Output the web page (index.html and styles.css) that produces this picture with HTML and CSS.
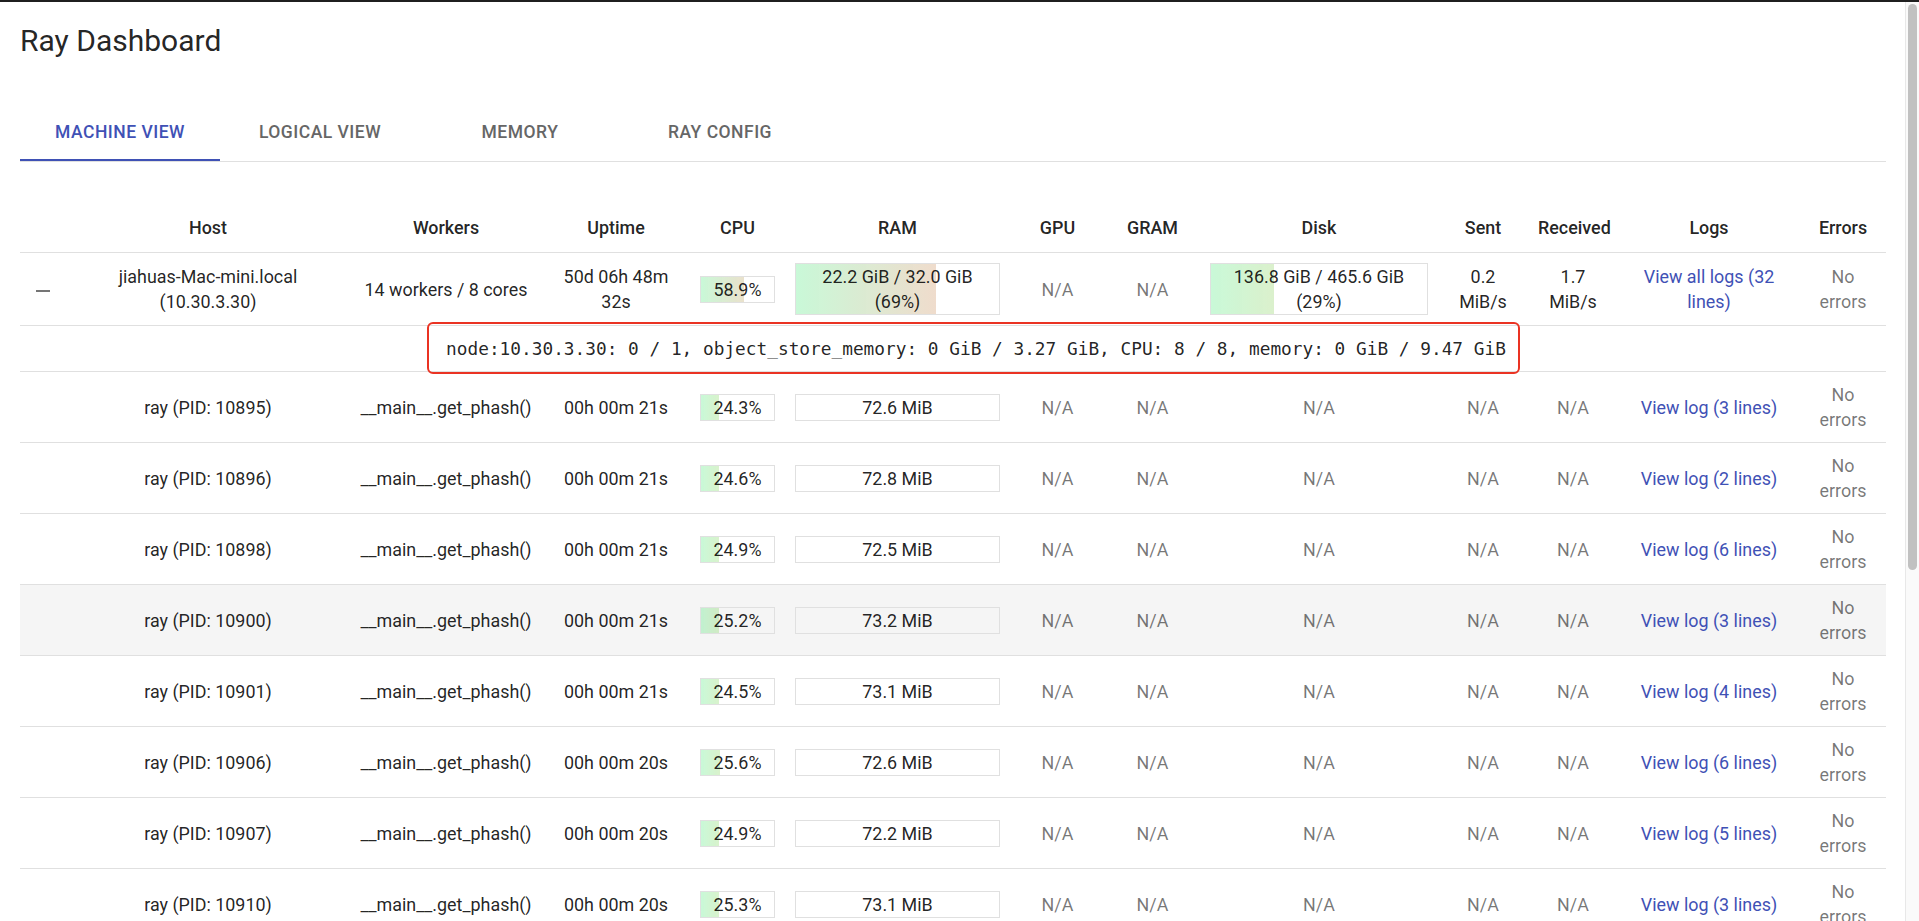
FILE: index.html
```html
<!DOCTYPE html>
<html lang="en">
<head>
<meta charset="utf-8">
<title>Ray Dashboard</title>
<link rel="stylesheet" href="styles.css">
</head>
<body>
<div class="window">
  <main class="app">
    <h1 class="title">Ray Dashboard</h1>
    <nav class="tabs">
      <div class="tab active">Machine View</div>
      <div class="tab">Logical View</div>
      <div class="tab">Memory</div>
      <div class="tab">Ray Config</div>
    </nav>
    <table class="grid">
      <colgroup>
        <col class="c-exp"><col class="c-host"><col class="c-workers"><col class="c-uptime"><col class="c-cpu"><col class="c-ram"><col class="c-gpu"><col class="c-gram"><col class="c-disk"><col class="c-sent"><col class="c-recv"><col class="c-logs"><col class="c-err">
      </colgroup>
      <thead>
        <tr><th></th><th>Host</th><th>Workers</th><th>Uptime</th><th>CPU</th><th>RAM</th><th>GPU</th><th>GRAM</th><th>Disk</th><th>Sent</th><th>Received</th><th>Logs</th><th>Errors</th></tr>
      </thead>
      <tbody>
        <tr>
          <td><span class="collapse"></span></td>
          <td>jiahuas-Mac-mini.local<br>(10.30.3.30)</td>
          <td>14 workers / 8 cores</td>
          <td>50d 06h 48m<br>32s</td>
          <td><div class="bar" style="--p:58.9%;--r:rgba(150,105,0,.2)">58.9%</div></td>
          <td><div class="bar" style="--p:69%;--r:rgba(176,79,0,.2)">22.2 GiB / 32.0 GiB<br>(69%)</div></td>
          <td class="muted">N/A</td>
          <td class="muted">N/A</td>
          <td><div class="bar" style="--p:29%;--r:rgba(74,181,0,.2)">136.8 GiB / 465.6 GiB<br>(29%)</div></td>
          <td>0.2<br>MiB/s</td>
          <td>1.7<br>MiB/s</td>
          <td><a href="#">View all logs (32<br>lines)</a></td>
          <td class="muted">No<br>errors</td>
        </tr>
        <tr class="resources">
          <td></td>
          <td colspan="12"><span class="annot">node:10.30.3.30: 0 / 1, object_store_memory: 0 GiB / 3.27 GiB, CPU: 8 / 8, memory: 0 GiB / 9.47 GiB</span></td>
        </tr>
        <tr>
          <td></td><td>ray (PID: 10895)</td><td>__main__.get_phash()</td><td>00h 00m 21s</td>
          <td><div class="bar" style="--p:24.3%;--r:rgba(62,193,0,.2)">24.3%</div></td>
          <td><div class="bar" style="--p:0.22%;--r:rgba(1,254,0,.2)">72.6 MiB</div></td>
          <td class="muted">N/A</td><td class="muted">N/A</td><td class="muted">N/A</td><td class="muted">N/A</td><td class="muted">N/A</td>
          <td><a href="#">View log (3 lines)</a></td><td class="muted">No<br>errors</td>
        </tr>
        <tr>
          <td></td><td>ray (PID: 10896)</td><td>__main__.get_phash()</td><td>00h 00m 21s</td>
          <td><div class="bar" style="--p:24.6%;--r:rgba(63,192,0,.2)">24.6%</div></td>
          <td><div class="bar" style="--p:0.22%;--r:rgba(1,254,0,.2)">72.8 MiB</div></td>
          <td class="muted">N/A</td><td class="muted">N/A</td><td class="muted">N/A</td><td class="muted">N/A</td><td class="muted">N/A</td>
          <td><a href="#">View log (2 lines)</a></td><td class="muted">No<br>errors</td>
        </tr>
        <tr>
          <td></td><td>ray (PID: 10898)</td><td>__main__.get_phash()</td><td>00h 00m 21s</td>
          <td><div class="bar" style="--p:24.9%;--r:rgba(63,192,0,.2)">24.9%</div></td>
          <td><div class="bar" style="--p:0.22%;--r:rgba(1,254,0,.2)">72.5 MiB</div></td>
          <td class="muted">N/A</td><td class="muted">N/A</td><td class="muted">N/A</td><td class="muted">N/A</td><td class="muted">N/A</td>
          <td><a href="#">View log (6 lines)</a></td><td class="muted">No<br>errors</td>
        </tr>
        <tr class="hover">
          <td></td><td>ray (PID: 10900)</td><td>__main__.get_phash()</td><td>00h 00m 21s</td>
          <td><div class="bar" style="--p:25.2%;--r:rgba(64,191,0,.2)">25.2%</div></td>
          <td><div class="bar" style="--p:0.22%;--r:rgba(1,254,0,.2)">73.2 MiB</div></td>
          <td class="muted">N/A</td><td class="muted">N/A</td><td class="muted">N/A</td><td class="muted">N/A</td><td class="muted">N/A</td>
          <td><a href="#">View log (3 lines)</a></td><td class="muted">No<br>errors</td>
        </tr>
        <tr>
          <td></td><td>ray (PID: 10901)</td><td>__main__.get_phash()</td><td>00h 00m 21s</td>
          <td><div class="bar" style="--p:24.5%;--r:rgba(62,193,0,.2)">24.5%</div></td>
          <td><div class="bar" style="--p:0.22%;--r:rgba(1,254,0,.2)">73.1 MiB</div></td>
          <td class="muted">N/A</td><td class="muted">N/A</td><td class="muted">N/A</td><td class="muted">N/A</td><td class="muted">N/A</td>
          <td><a href="#">View log (4 lines)</a></td><td class="muted">No<br>errors</td>
        </tr>
        <tr>
          <td></td><td>ray (PID: 10906)</td><td>__main__.get_phash()</td><td>00h 00m 20s</td>
          <td><div class="bar" style="--p:25.6%;--r:rgba(65,190,0,.2)">25.6%</div></td>
          <td><div class="bar" style="--p:0.22%;--r:rgba(1,254,0,.2)">72.6 MiB</div></td>
          <td class="muted">N/A</td><td class="muted">N/A</td><td class="muted">N/A</td><td class="muted">N/A</td><td class="muted">N/A</td>
          <td><a href="#">View log (6 lines)</a></td><td class="muted">No<br>errors</td>
        </tr>
        <tr>
          <td></td><td>ray (PID: 10907)</td><td>__main__.get_phash()</td><td>00h 00m 20s</td>
          <td><div class="bar" style="--p:24.9%;--r:rgba(63,192,0,.2)">24.9%</div></td>
          <td><div class="bar" style="--p:0.22%;--r:rgba(1,254,0,.2)">72.2 MiB</div></td>
          <td class="muted">N/A</td><td class="muted">N/A</td><td class="muted">N/A</td><td class="muted">N/A</td><td class="muted">N/A</td>
          <td><a href="#">View log (5 lines)</a></td><td class="muted">No<br>errors</td>
        </tr>
        <tr>
          <td></td><td>ray (PID: 10910)</td><td>__main__.get_phash()</td><td>00h 00m 20s</td>
          <td><div class="bar" style="--p:25.3%;--r:rgba(65,190,0,.2)">25.3%</div></td>
          <td><div class="bar" style="--p:0.22%;--r:rgba(1,254,0,.2)">73.1 MiB</div></td>
          <td class="muted">N/A</td><td class="muted">N/A</td><td class="muted">N/A</td><td class="muted">N/A</td><td class="muted">N/A</td>
          <td><a href="#">View log (3 lines)</a></td><td class="muted">No<br>errors</td>
        </tr>
      </tbody>
    </table>
  </main>
  <div class="scrollbar"><div class="thumb"></div></div>
</div>
</body>
</html>
```

FILE: styles.css
```css
html, body {
  margin: 0;
  height: 100%;
  overflow: hidden;
  background: #ffffff;
}

body {
  box-sizing: border-box;
  border-top: 2px solid #1f1f1f;
  font-family: Roboto, "Liberation Sans", sans-serif;
  color: rgba(0, 0, 0, 0.87);
}

.window {
  display: flex;
  height: 919px;
}

.app {
  flex: 1;
  min-width: 0;
  padding: 19px 19px 0 20px;
  overflow: hidden;
}

.title {
  margin: 0;
  font-size: 30px;
  font-weight: 400;
  line-height: 39px;
  color: rgba(0, 0, 0, 0.87);
}

.tabs {
  display: flex;
  margin-top: 42px;
  border-bottom: 1px solid #e0e0e0;
}

.tab {
  position: relative;
  width: 200px;
  height: 59px;
  display: flex;
  align-items: center;
  justify-content: center;
  font-size: 17.5px;
  font-weight: 500;
  text-transform: uppercase;
  letter-spacing: 0.5px;
  color: #666666;
}

.tab.active {
  color: #3f51b5;
}

.tab.active::after {
  content: "";
  position: absolute;
  left: 0;
  right: 0;
  bottom: 0;
  height: 2.5px;
  background: #3f51b5;
}

.grid {
  width: 100%;
  margin-top: 45px;
  table-layout: fixed;
  border-collapse: collapse;
  font-size: 17.9px;
  line-height: 25px;
}

.c-exp { width: 46px; }
.c-host { width: 284px; }
.c-workers { width: 192px; }
.c-uptime { width: 148px; }
.c-cpu { width: 95px; }
.c-ram { width: 225px; }
.c-gpu { width: 95px; }
.c-gram { width: 95px; }
.c-disk { width: 238px; }
.c-sent { width: 90px; }
.c-recv { width: 90px; }
.c-logs { width: 182px; }
.c-err { width: 86px; }

.grid th,
.grid td {
  padding: 10px;
  text-align: center;
  vertical-align: middle;
  border-bottom: 1px solid #e0e0e0;
  white-space: nowrap;
}

.grid th {
  padding: 8px 10px 12px;
  font-weight: 500;
  color: rgba(0, 0, 0, 0.87);
}

.grid tr.hover td {
  background: #f5f5f5;
}

.muted {
  color: rgba(0, 0, 0, 0.54);
}

.grid a {
  color: #3f51b5;
  text-decoration: none;
}

.collapse {
  display: inline-block;
  width: 14px;
  height: 2px;
  background: #757575;
  vertical-align: middle;
}

.bar {
  border: 1px solid #e0e0e0;
  text-align: center;
  background: linear-gradient(to right, rgba(0, 225, 70, 0.21) 0%, var(--r) var(--p), transparent var(--p));
}

.resources td {
  font-family: "DejaVu Sans Mono", "Liberation Mono", monospace;
  font-size: 17.8px;
}

.annot {
  position: relative;
  display: inline-block;
}

.annot::after {
  content: "";
  position: absolute;
  left: -19px;
  right: -14px;
  top: -14.5px;
  bottom: -12.5px;
  border: 2.5px solid #ea3323;
  border-radius: 6px;
}

.scrollbar {
  flex: none;
  width: 14px;
  box-sizing: border-box;
  padding: 2px 2px 0 2px;
  border-left: 1px solid #e8e8e8;
  background: #fafafa;
}

.thumb {
  height: 566px;
  border-radius: 5px;
  background: #c1c1c1;
}
```
